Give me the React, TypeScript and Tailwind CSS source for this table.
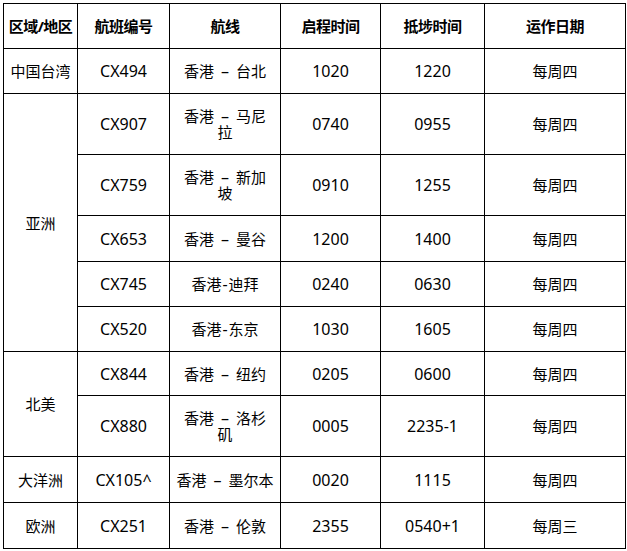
import React from 'react';

type Flight = {
    no: string;
    to: string;
    wrap?: string;
    dash?: boolean;
    dep: string;
    arr: string;
    days: string;
    h: number;
};

type Region = { name: string; flights: Flight[] };

const regions: Region[] = [
    {
        name: '中国台湾',
        flights: [{ no: 'CX494', to: '台北', dep: '1020', arr: '1220', days: '每周四', h: 45 }],
    },
    {
        name: '亚洲',
        flights: [
            { no: 'CX907', to: '马尼', wrap: '拉', dep: '0740', arr: '0955', days: '每周四', h: 61 },
            { no: 'CX759', to: '新加', wrap: '坡', dep: '0910', arr: '1255', days: '每周四', h: 61 },
            { no: 'CX653', to: '曼谷', dep: '1200', arr: '1400', days: '每周四', h: 46 },
            { no: 'CX745', to: '迪拜', dash: true, dep: '0240', arr: '0630', days: '每周四', h: 45 },
            { no: 'CX520', to: '东京', dash: true, dep: '1030', arr: '1605', days: '每周四', h: 45 },
        ],
    },
    {
        name: '北美',
        flights: [
            { no: 'CX844', to: '纽约', dep: '0205', arr: '0600', days: '每周四', h: 44 },
            { no: 'CX880', to: '洛杉', wrap: '矶', dep: '0005', arr: '2235-1', days: '每周四', h: 61 },
        ],
    },
    {
        name: '大洋洲',
        flights: [{ no: 'CX105^', to: '墨尔本', dep: '0020', arr: '1115', days: '每周四', h: 46 }],
    },
    {
        name: '欧洲',
        flights: [{ no: 'CX251', to: '伦敦', dep: '2355', arr: '0540+1', days: '每周三', h: 46 }],
    },
];

const headers = ['区域/地区', '航班编号', '航线', '启程时间', '抵埗时间', '运作日期'];
const widths = [74, 92, 111, 100, 104, 141];

const cell = 'border border-black p-0 text-center align-middle';
const latin = 'text-[16px]';

const Route = ({ f }: { f: Flight }) => (
    <span className="whitespace-nowrap">
        香港
        {f.dash ? (
            <span className={`${latin} mx-[1px]`}>-</span>
        ) : (
            <span className={`${latin} mx-[7px]`}>–</span>
        )}
        {f.to}
        {f.wrap && (
            <>
                <br />
                {f.wrap}
            </>
        )}
    </span>
);

export default function App() {
    return (
        <div className="bg-white min-h-screen pt-[3px] pl-[3px] font-['Noto_Sans','Noto_Sans_CJK_SC',sans-serif] text-[15px] leading-[16px] text-black">
            <table className="table-fixed border-collapse w-[622px]">
                <colgroup>
                    {widths.map((w, i) => (
                        <col key={i} style={{ width: w }} />
                    ))}
                </colgroup>
                <thead>
                    <tr>
                        {headers.map((h) => (
                            <th key={h} className={`${cell} h-[45px] font-bold tracking-[-0.5px]`}>
                                {h}
                            </th>
                        ))}
                    </tr>
                </thead>
                <tbody>
                    {regions.map((r) =>
                        r.flights.map((f, i) => (
                            <tr key={f.no}>
                                {i === 0 && (
                                    <td rowSpan={r.flights.length} className={cell}>
                                        {r.name}
                                    </td>
                                )}
                                <td className={`${cell} ${latin}`} style={{ height: f.h }}>{f.no}</td>
                                <td className={cell}><Route f={f} /></td>
                                <td className={`${cell} ${latin}`}>{f.dep}</td>
                                <td className={`${cell} ${latin}`}>{f.arr}</td>
                                <td className={cell}>{f.days}</td>
                            </tr>
                        ))
                    )}
                </tbody>
            </table>
        </div>
    );
}
